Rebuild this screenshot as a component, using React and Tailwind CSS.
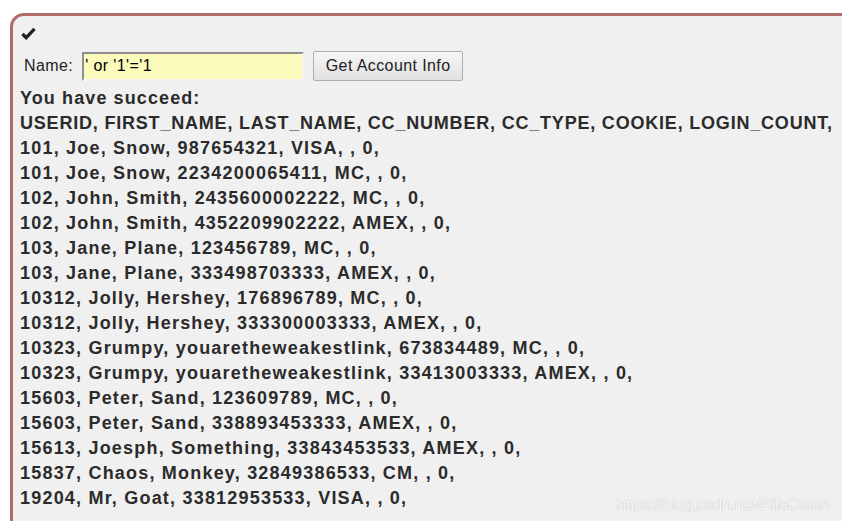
const rows = [
  '101, Joe, Snow, 987654321, VISA, , 0,',
  '101, Joe, Snow, 2234200065411, MC, , 0,',
  '102, John, Smith, 2435600002222, MC, , 0,',
  '102, John, Smith, 4352209902222, AMEX, , 0,',
  '103, Jane, Plane, 123456789, MC, , 0,',
  '103, Jane, Plane, 333498703333, AMEX, , 0,',
  '10312, Jolly, Hershey, 176896789, MC, , 0,',
  '10312, Jolly, Hershey, 333300003333, AMEX, , 0,',
  '10323, Grumpy, youaretheweakestlink, 673834489, MC, , 0,',
  '10323, Grumpy, youaretheweakestlink, 33413003333, AMEX, , 0,',
  '15603, Peter, Sand, 123609789, MC, , 0,',
  '15603, Peter, Sand, 338893453333, AMEX, , 0,',
  '15613, Joesph, Something, 33843453533, AMEX, , 0,',
  '15837, Chaos, Monkey, 32849386533, CM, , 0,',
  '19204, Mr, Goat, 33812953533, VISA, , 0,',
];

export default function App() {
  return (
    <div className="relative h-[521px] w-[842px] overflow-hidden bg-white font-['Liberation_Sans',Arial,sans-serif]">
      <div className="ml-[10px] mt-[13px] h-[560px] w-[900px] rounded-tl-[14px] border-[3px] border-[#b06b6b] bg-[#f0f0f0] pl-[7px] pt-[11px]">
        <svg width="15" height="13" viewBox="0 0 16 14" className="ml-px">
          <path d="M1.5 7.5 L5.5 11.5 L14.5 2" fill="none" stroke="#222" strokeWidth="3.6" />
        </svg>
        <div className="mt-[11px] flex items-center">
          <span className="ml-[4px] text-[16px] tracking-[0.4px] text-[#222]">Name:</span>
          <input
            readOnly
            value="' or '1'='1"
            className="ml-[9px] h-[29px] w-[222px] border-[2px] border-b-[#f4f4f4] border-l-[#8f8f8f] border-r-[#f4f4f4] border-t-[#8f8f8f] bg-[#fbfbbc] px-[1px] text-[16px] tracking-[0.4px] text-black outline-none"
          />
          <button className="ml-[9px] h-[30px] w-[150px] rounded-[2px] border border-[#adadad] bg-gradient-to-b from-[#f6f6f6] to-[#e1e1e1] text-[16px] tracking-[0.4px] text-[#222]">
            Get Account Info
          </button>
        </div>
        <div className="mt-[5px] whitespace-nowrap text-[18px] font-bold leading-[25px] tracking-[1.2px] text-[#2b2b2b]">
          <div className="tracking-[1.1px]">You have succeed:</div>
          <div className="tracking-[0.8px]">USERID, FIRST_NAME, LAST_NAME, CC_NUMBER, CC_TYPE, COOKIE, LOGIN_COUNT,</div>
          {rows.map((r, i) => (
            <div key={i}>{r}</div>
          ))}
        </div>
      </div>
      <div className="absolute left-[617px] top-[492px] text-[17px] tracking-[-0.6px] text-[#f8f8f8] [text-shadow:0_0_1px_#a8a8a8]">
        https://blog.csdn.net/AlfaCuton
      </div>
    </div>
  );
}
